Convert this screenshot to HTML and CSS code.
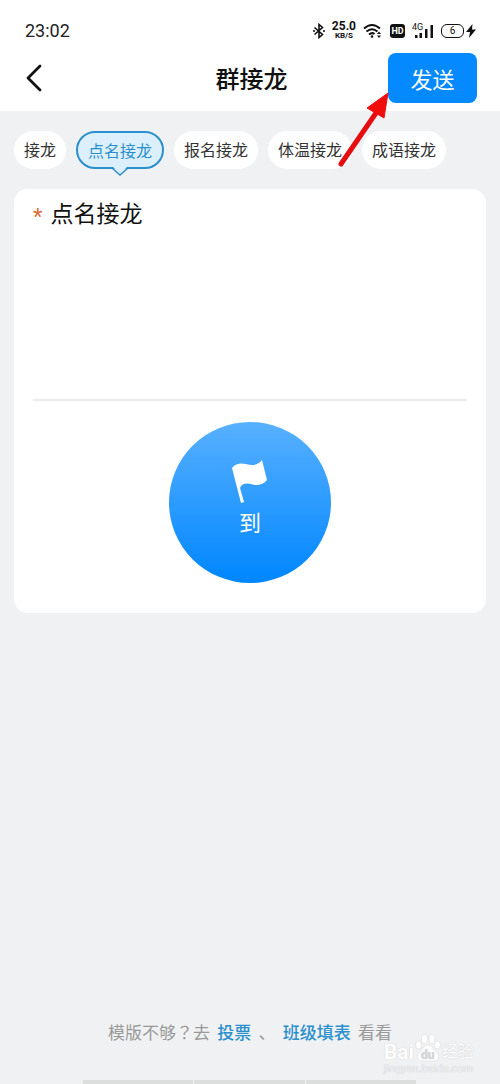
FILE: index.html
```html
<!DOCTYPE html>
<html lang="zh-CN">
<head>
    <meta charset="UTF-8">
    <meta name="viewport" content="width=device-width, initial-scale=1.0">
    <title>群接龙</title>
    <link rel="stylesheet" href="styles.css">
</head>
<body>
    <header class="top">
        <div class="status">
            <span class="time">23:02</span>
            <div class="status-icons">
                <svg class="bluetooth" width="12" height="16" viewBox="0 0 12 16" fill="none" stroke="#111" stroke-width="1.6">
                    <path d="M1.500 4.500l8 7L6 14.500v-13l3.500 3-8 7"/>
                    <path d="M0 8h2M10 8h2"/>
                </svg>
                <span class="speed"><b>25.0</b><small>KB/S</small></span>
                <svg class="wifi" width="20" height="16" viewBox="0 0 20 16" fill="none" stroke="#111" stroke-width="2">
                    <path d="M1 5.500q8-7 16 0M3.500 8.500q5.500-4.500 11 0M6 11.500q3-2.500 5.500-.5"/>
                    <circle cx="9" cy="13.500" r="1.300" fill="#111" stroke="none"/>
                    <path d="M14 11l2-2.500 2 2.500zM14 12.500l2 2.500 2-2.500z" fill="#111" stroke="none"/>
                </svg>
                <span class="hd">HD</span>
                <svg class="signal" width="22" height="16" viewBox="0 0 22 16" fill="#111">
                    <text x="0" y="7" font-size="9">4G</text>
                    <path d="M3 12h2.500v3H3zM7.500 10H10v5H7.500zM13 6h2.500v9H13zM18.500 2H21v13h-2.500z"/>
                </svg>
                <span class="battery">6</span>
                <svg class="bolt" width="10" height="14" viewBox="0 0 10 14" fill="#111">
                    <path d="M6.500 0L0 8h4l-1 6 7-8.500H6z"/>
                </svg>
            </div>
        </div>
        <nav class="navbar">
            <button class="back" type="button" aria-label="返回">
                <svg width="16" height="28" viewBox="0 0 16 28" fill="none" stroke="#111" stroke-width="2.800" stroke-linecap="round" stroke-linejoin="round">
                    <path d="M14 2L2 14l12 12"/>
                </svg>
            </button>
            <h1>群接龙</h1>
            <button class="send" type="button">发送</button>
        </nav>
    </header>

    <main>
        <div class="tabs">
            <button class="tab" type="button">接龙</button>
            <button class="tab active" type="button">点名接龙
                <svg class="tip" width="18" height="9" viewBox="0 0 18 9">
                    <path d="M0 0h2l7 7 7-7h2" fill="#dceffc"/>
                    <path d="M1 1l8 7 8-7" fill="none" stroke="#2a8fcd" stroke-width="1.500"/>
                </svg>
            </button>
            <button class="tab" type="button">报名接龙</button>
            <button class="tab" type="button">体温接龙</button>
            <button class="tab" type="button">成语接龙</button>
        </div>

        <section class="card">
            <div class="topic">
                <label for="topic">*</label>
                <textarea id="topic">点名接龙</textarea>
            </div>
            <button class="arrive" type="button">
                <svg width="36" height="44" viewBox="0 0 36 44" fill="#fff">
                    <path d="M0 8C4 3 9 3 14 4c7 2 12 1 16-4l5 20c-4 5-10 6-16 4-5-1-9-1-11 4l4 14-3 1z"/>
                </svg>
                到
            </button>
        </section>
    </main>

    <footer class="more">
        <p>模版不够<span class="mark" lang="zh-TW">？</span>去 <a href="#">投票</a> 、 <a href="#">班级填表</a> 看看</p>
        <div class="bar"><span></span><span></span><span></span></div>
    </footer>

    <svg class="arrow" width="52" height="76" viewBox="0 0 52 76">
        <path d="M3 72L38 21" stroke="#e60d10" stroke-width="5" stroke-linecap="round"/>
        <path d="M50 1L29 16l17 10z" fill="#f20d0d" stroke="#f20d0d"/>
    </svg>

    <div class="watermark">
        <div class="brand">
            <span>Bai</span>
            <svg width="26" height="28" viewBox="0 0 26 28" fill="#fff" stroke="#d8dadc" stroke-width=".6">
                <ellipse cx="3.500" cy="11" rx="3" ry="4"/>
                <ellipse cx="9.500" cy="5" rx="3" ry="4.500"/>
                <ellipse cx="17" cy="5" rx="3" ry="4.500"/>
                <ellipse cx="22.500" cy="11" rx="3" ry="4"/>
                <path d="M13 11c4 0 5 4 8 7 4 3 3 9-2 9H7c-5 0-6-6-2-9 3-3 4-7 8-7z"/>
                <text x="6" y="25" font-size="12" font-weight="bold" fill="#d5d8da" stroke="none">du</text>
            </svg>
            <span class="jy">经验</span>
        </div>
        <div class="site">jingyan.baidu.com</div>
    </div>
</body>
</html>
```
FILE: styles.css
```css
* {
    box-sizing: border-box;
}
body {
    position: relative;
    display: flex;
    flex-direction: column;
    min-height: 100vh;
    margin: 0;
    background: #eff1f3;
    color: #111;
    font-family: Roboto, "Noto Sans CJK SC", sans-serif;
}
button {
    border: none;
    padding: 0;
    font-family: inherit;
    cursor: pointer;
}

/* status bar and title */
.top {
    height: 111px;
    background: #fff;
}
.status {
    display: flex;
    justify-content: space-between;
    align-items: center;
    height: 45px;
    padding: 16px 24px 0 25px;
}
.time {
    font-size: 18px;
    color: #222;
}
.status-icons {
    display: flex;
    align-items: center;
    gap: 7px;
}
.speed {
    display: flex;
    flex-direction: column;
    align-items: center;
    font-size: 12px;
    line-height: 9px;
}
.speed small {
    font-size: 8px;
    font-weight: bold;
    line-height: 9px;
}
.hd {
    width: 15px;
    border-radius: 3px;
    background: #111;
    color: #fff;
    font-size: 9px;
    font-weight: bold;
    line-height: 14px;
    text-align: center;
}
.battery {
    width: 23px;
    border: 1px solid #111;
    border-radius: 6px;
    font-size: 10px;
    line-height: 12px;
    text-align: center;
}
.bolt {
    margin-left: -5px;
}
.navbar {
    display: grid;
    grid-template-columns: 1fr auto 1fr;
    align-items: center;
    padding: 8px 23px 0 26px;
}
.back {
    display: flex;
    justify-self: start;
    background: none;
}
h1 {
    margin: 0;
    padding-top: 3px;
    font-size: 24px;
    font-weight: 500;
    line-height: 32px;
}
.send {
    justify-self: end;
    width: 89px;
    height: 50px;
    border-radius: 8px;
    background: #0589ff;
    color: #fff;
    font-size: 22px;
}

/* type tabs */
main {
    flex: 1;
    padding: 20px 14px;
}
.tabs {
    display: flex;
    gap: 10px;
    height: 38px;
    margin-bottom: 20px;
}
.tab {
    position: relative;
    flex: none;
    padding: 0 10px 2px;
    border-radius: 19px;
    background: #fff;
    color: #333;
    font-size: 16px;
}
.tab.active {
    padding: 0 10px;
    border: 2px solid #2a8fcd;
    background: #dceffc;
    color: #2a8fcd;
}
.tip {
    position: absolute;
    left: 50%;
    top: 100%;
    margin-left: -9px;
}

/* form card */
.card {
    padding: 8px 19px 30px;
    border-radius: 14px;
    background: #fff;
}
.topic {
    display: flex;
    gap: 8px;
    height: 204px;
    margin-bottom: 21px;
    border-bottom: 2px solid #ebebeb;
}
.topic label {
    color: #d9703c;
    font-size: 22px;
    line-height: 40px;
}
.topic textarea {
    flex: 1;
    padding: 0;
    border: none;
    outline: none;
    resize: none;
    background: none;
    color: #111;
    font-family: inherit;
    font-size: 23px;
    line-height: 36px;
}
.arrive {
    display: flex;
    flex-direction: column;
    align-items: center;
    gap: 4px;
    width: 162px;
    height: 161px;
    margin: 0 auto;
    padding-top: 38px;
    border-radius: 50%;
    background: linear-gradient(#58b0ff, #0086ff);
    color: #fff;
    font-size: 22px;
    line-height: 32px;
}

/* footer links */
.more p {
    margin: 0 0 34px;
    color: #999;
    font-size: 17px;
    line-height: 26px;
    text-align: center;
    white-space: pre;
}
.more .mark {
    font-family: "Noto Sans CJK TC", sans-serif;
}
.more a {
    margin: 0 3px;
    color: #2a8fcd;
    font-weight: 500;
    text-decoration: none;
}
.bar {
    display: flex;
    gap: 1px;
    height: 4px;
    margin: 0 84px 0 83px;
}
.bar span {
    flex: 1;
    background: #dcdddd;
}

/* pointer and watermark lie over the page */
.arrow {
    position: absolute;
    left: 338px;
    top: 92px;
}
.watermark {
    position: absolute;
    right: 26px;
    bottom: 8px;
    color: #fff;
    text-shadow: 0 0 1px #bbb;
    pointer-events: none;
}
.brand {
    display: flex;
    align-items: flex-end;
    gap: 1px;
    font-size: 21px;
    font-weight: bold;
    line-height: 20px;
}
.jy {
    font-size: 16px;
    font-weight: normal;
}
.site {
    font-size: 11px;
    line-height: 14px;
    color: #eff1f3;
}
```
